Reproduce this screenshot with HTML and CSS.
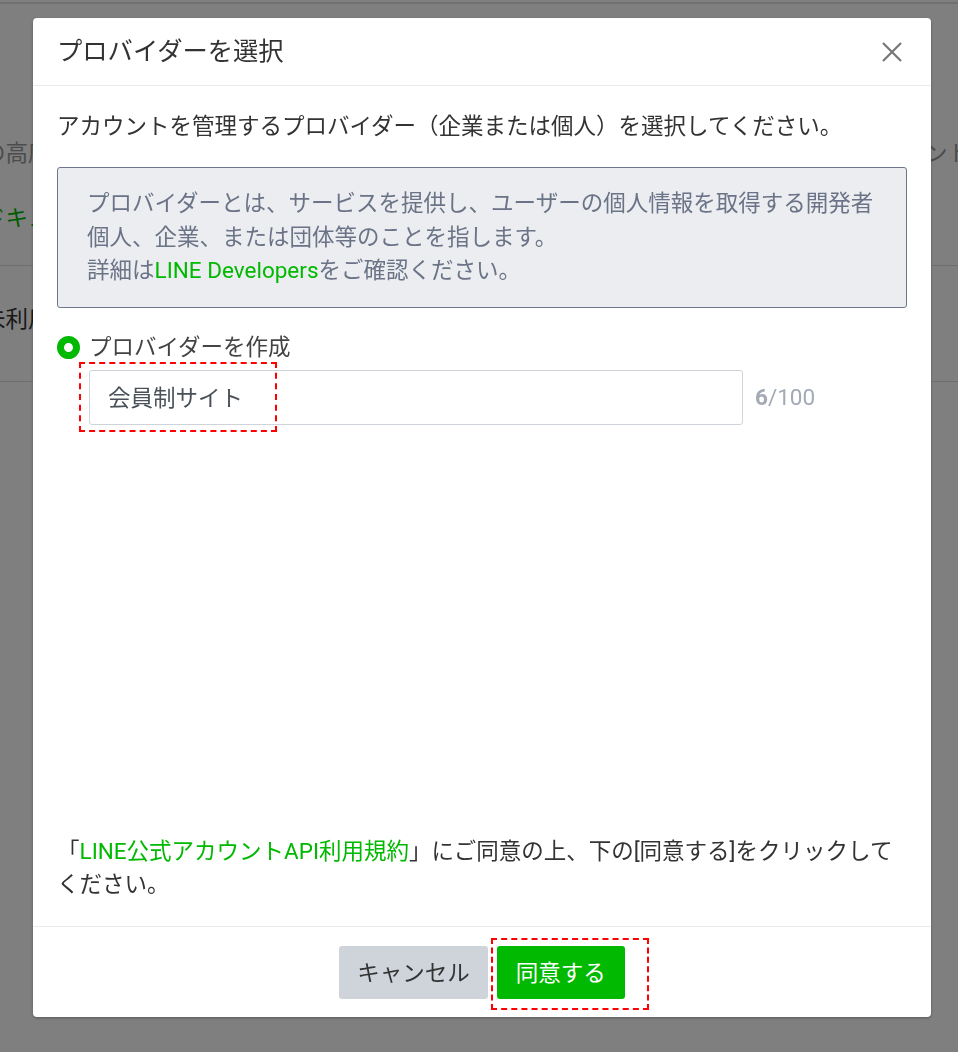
FILE: index.html
```html
<!DOCTYPE html>
<html lang="ja">
<head>
    <meta charset="UTF-8">
    <title>プロバイダーを選択</title>
    <link rel="stylesheet" href="styles.css">
</head>
<body>

    <div class="page">
        <div class="page-row row-plan">
            <div class="cell-left">
                <p class="muted">の高度な機能</p>
                <p class="green">ドキュメント</p>
            </div>
            <div class="cell-right">
                <p class="muted">ント</p>
            </div>
        </div>
        <div class="page-row row-usage">
            <div class="cell-left">
                <p>未利用</p>
            </div>
        </div>
    </div>

    <div class="overlay"></div>

    <div class="modal">
        <div class="modal-header">
            <h2 class="modal-title">プロバイダーを選択</h2>
            <button class="close" aria-label="閉じる">
                <svg width="20" height="20" viewBox="0 0 20 20">
                    <path d="M1 1 L19 19 M19 1 L1 19" stroke="#777" stroke-width="2.2" fill="none"/>
                </svg>
            </button>
        </div>

        <div class="modal-body">
            <p class="lead">アカウントを管理するプロバイダー（企業または個人）を選択してください。</p>

            <div class="info">
                プロバイダーとは、サービスを提供し、ユーザーの個人情報を取得する開発者<br>
                個人、企業、または団体等のことを指します。<br>
                詳細は<a href="#">LINE Developers</a>をご確認ください。
            </div>

            <label class="option">
                <span class="radio"></span>
                プロバイダーを作成
            </label>

            <div class="field-row">
                <div class="field">
                    <input class="text-input" type="text" value="会員制サイト">
                    <span class="mark mark-input"></span>
                </div>
                <span class="counter"><b>6</b>/100</span>
            </div>

            <p class="terms">「<a href="#">LINE公式アカウントAPI利用規約</a>」にご同意の上、下の[同意する]をクリックしてください。</p>
        </div>

        <div class="modal-footer">
            <button class="btn btn-cancel">キャンセル</button>
            <div class="btn-wrap">
                <button class="btn btn-agree">同意する</button>
                <span class="mark mark-btn"></span>
            </div>
        </div>
    </div>

</body>
</html>
```

FILE: styles.css
```css
* {
    margin: 0;
    padding: 0;
    box-sizing: border-box;
}

body {
    width: 958px;
    height: 1052px;
    overflow: hidden;
    background: #fff;
    font-family: Roboto, "Noto Sans CJK JP", sans-serif;
    font-size: 22.5px;
    color: #333;
}

/* page behind the dialog */
.page {
    margin: 0 -20px;
    border-top: 2px solid #e0e0e0;
    margin-top: 2px;
}

.page-row {
    display: flex;
    justify-content: space-between;
    border-bottom: 1px solid #ddd;
    line-height: 33px;
}

.row-plan {
    padding: 133px 0 30px;
}

.row-plan .green {
    margin-top: 32px;
}

.row-usage {
    padding: 37px 0 45px;
}

.cell-left {
    padding-left: 3px;
}

.cell-right {
    margin-right: 8px;
}

.muted {
    color: #999;
}

.green {
    color: #00b900;
}

.overlay {
    position: fixed;
    inset: 0;
    background: rgba(0, 0, 0, 0.5);
}

/* dialog */
.modal {
    position: fixed;
    left: 33px;
    top: 18px;
    width: 898px;
    height: 999px;
    background: #fff;
    border-radius: 4px;
    box-shadow: 0 1px 3px rgba(0, 0, 0, 0.3);
    display: flex;
    flex-direction: column;
}

.modal-header {
    height: 68px;
    border-bottom: 1px solid #e9ecef;
    padding: 0 24px;
    display: flex;
    align-items: center;
    justify-content: space-between;
}

.modal-title {
    font-size: 25.3px;
    font-weight: 400;
    color: #333;
    line-height: 33px;
}

.close {
    border: none;
    background: none;
    width: 20px;
    height: 20px;
    margin-right: 5px;
    cursor: pointer;
}

.close svg {
    display: block;
}

.modal-body {
    flex: 1;
    padding: 24px 24px 25px;
    display: flex;
    flex-direction: column;
}

.lead {
    line-height: 33px;
}

.info {
    margin-top: 24px;
    padding: 19px 29px;
    background: #ebedf0;
    border: 1px solid #6e768b;
    border-radius: 3px;
    color: #6b7387;
    line-height: 33.5px;
}

a {
    color: #00b900;
    text-decoration: none;
}

.option {
    margin-top: 23px;
    display: flex;
    align-items: center;
    line-height: 33px;
    color: #444;
}

.radio {
    width: 23px;
    height: 23px;
    border-radius: 50%;
    border: 7px solid #00b900;
    background: #fff;
    margin-right: 9px;
}

.field-row {
    margin-top: 6px;
    padding-left: 32px;
    display: flex;
    align-items: center;
}

.field {
    position: relative;
}

.text-input {
    display: block;
    width: 654px;
    height: 55px;
    border: 1px solid #ced4da;
    border-radius: 3px;
    padding: 0 18px 3px;
    font-family: Roboto, "Noto Sans CJK JP", sans-serif;
    font-size: 22.5px;
    color: #495057;
    outline: none;
}

.counter {
    margin-left: 12px;
    color: #a2aab5;
    font-size: 22.5px;
}

.mark {
    position: absolute;
    border: 2px dashed #f00;
    pointer-events: none;
}

.mark-input {
    left: -10px;
    top: -8px;
    width: 198px;
    height: 70px;
}

.terms {
    margin-top: auto;
    line-height: 33px;
}

.modal-footer {
    height: 91px;
    border-top: 1px solid #e9ecef;
    display: flex;
    justify-content: center;
    align-items: center;
    gap: 9px;
}

.btn {
    height: 53px;
    padding: 0 18px 2px;
    border: none;
    border-radius: 3px;
    font-family: Roboto, "Noto Sans CJK JP", sans-serif;
    font-size: 22.5px;
    cursor: pointer;
}

.btn-cancel {
    background: #cfd4db;
    color: #333;
}

.btn-wrap {
    position: relative;
}

.btn-agree {
    display: block;
    background: #00b900;
    color: #fff;
    padding: 0 19px 2px;
}

.mark-btn {
    left: -6px;
    top: -8px;
    width: 158px;
    height: 72px;
}
```
